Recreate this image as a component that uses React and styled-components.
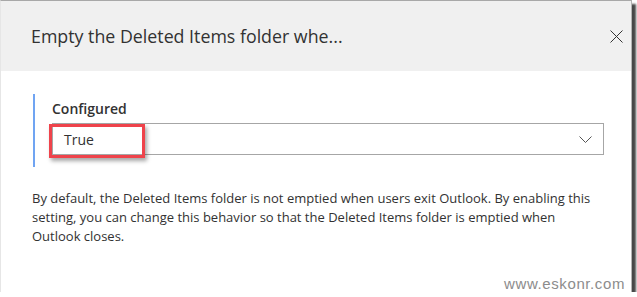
import styled, { createGlobalStyle } from "styled-components";

const GlobalStyle = createGlobalStyle`
  html, body {
    margin: 0;
    padding: 0;
    background: #ffffff;
  }
  body {
    font-family: "Open Sans", "Noto Sans", sans-serif;
    color: #323232;
  }
`;

const Frame = styled.div`
  position: relative;
  box-sizing: border-box;
  width: 632px;
  height: 292px;
  background: #ffffff;
  border-top: 1px solid #a8a8a8;
  border-left: 1px solid #e6e6e6;
  border-right: 1px solid #b4b4b4;
  box-shadow: 4px 4px 2px rgba(40, 40, 40, 0.85);
  display: flex;
  flex-direction: column;
`;

const Header = styled.div`
  height: 70px;
  flex: none;
  background: #f0f0f0;
  display: flex;
  align-items: center;
  justify-content: space-between;
  padding: 0 8px 0 30px;
`;

const Title = styled.h1`
  margin: 0;
  font-size: 17.8px;
  font-weight: 400;
  color: #323232;
`;

const CloseButton = styled.button`
  border: 0;
  background: none;
  padding: 0;
  width: 14px;
  height: 14px;
  display: flex;
  align-items: center;
  justify-content: center;
  cursor: pointer;
`;

const Body = styled.div`
  padding: 23px 27px 0 31px;
`;

const Setting = styled.div`
  margin-left: 1px;
  border-left: 2px solid #70a4f2;
  padding: 5px 0 12px 17px;
`;

const Label = styled.div`
  font-size: 14px;
  line-height: 19px;
  font-weight: 600;
  color: #323232;
  margin-bottom: 5px;
`;

const Select = styled.div`
  position: relative;
  box-sizing: border-box;
  height: 32px;
  border: 1px solid #a6a6a6;
  display: flex;
  align-items: center;
  justify-content: space-between;
  padding: 0 11px;
  font-size: 14px;
  color: #323232;
`;

// red annotation box drawn over the select
const Highlight = styled.div`
  position: absolute;
  left: -4px;
  top: 0;
  width: 96px;
  height: 34px;
  box-sizing: border-box;
  border: 3px solid #ef434b;
  box-shadow: 2px 3px 4px rgba(0, 0, 0, 0.35);
  pointer-events: none;
`;

const Description = styled.p`
  margin: 22px 0 0 0;
  font-size: 13px;
  line-height: 19px;
  color: #323232;
  white-space: nowrap;
`;

const Watermark = styled.div`
  position: absolute;
  right: 6px;
  bottom: 1px;
  font-family: "Liberation Sans", Arial, sans-serif;
  font-size: 15px;
  line-height: 15px;
  letter-spacing: 0.6px;
  color: #8c8c8c;
`;

function Chevron() {
  return (
    <svg width="13" height="7" viewBox="0 0 13 7" fill="none">
      <path d="M0.5 0.5 L6.5 6.5 L12.5 0.5" stroke="#555" strokeWidth="1" />
    </svg>
  );
}

function CloseIcon() {
  return (
    <svg width="13" height="13" viewBox="0 0 13 13" fill="none">
      <path d="M0.5 0.5 L12.5 12.5 M12.5 0.5 L0.5 12.5" stroke="#333" strokeWidth="1" />
    </svg>
  );
}

export default function App() {
  return (
    <>
      <GlobalStyle />
      <Frame>
        <Header>
          <Title>Empty the Deleted Items folder whe...</Title>
          <CloseButton aria-label="Close">
            <CloseIcon />
          </CloseButton>
        </Header>

        <Body>
          <Setting>
            <Label>Configured</Label>
            <Select>
              <span>True</span>
              <Chevron />
              <Highlight />
            </Select>
          </Setting>

          <Description>
            By default, the Deleted Items folder is not emptied when users exit
            Outlook. By enabling this
            <br />
            setting, you can change this behavior so that the Deleted Items
            folder is emptied when
            <br />
            Outlook closes.
          </Description>
        </Body>

        <Watermark>www.eskonr.com</Watermark>
      </Frame>
    </>
  );
}
